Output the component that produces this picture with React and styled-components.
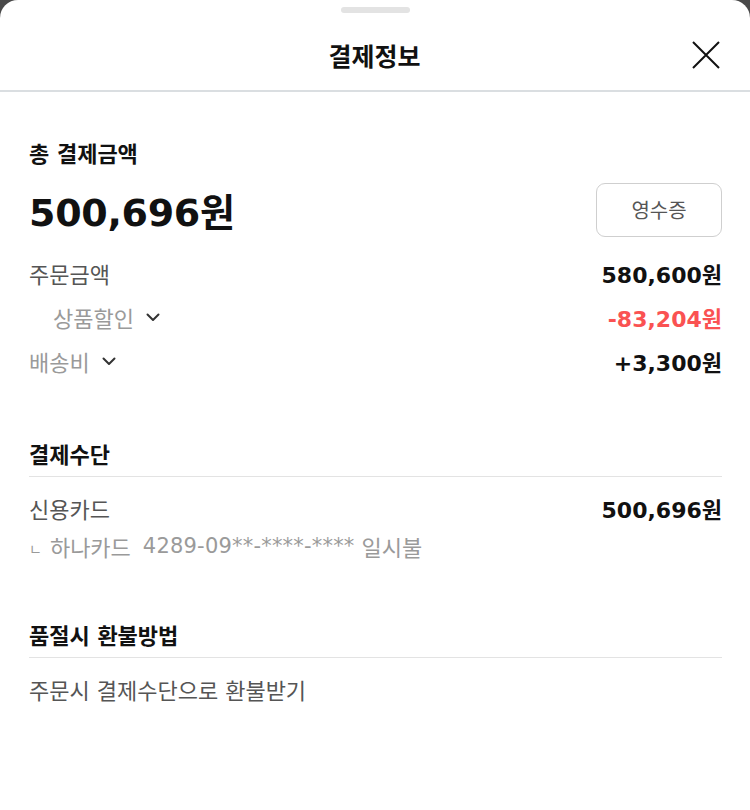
import React from "react";
import styled, { createGlobalStyle } from "styled-components";

const GlobalStyle = createGlobalStyle`
  html, body {
    margin: 0;
    padding: 0;
    background: #4a4a4a;
  }
  body {
    font-family: "DejaVu Sans", "Noto Sans CJK KR", sans-serif;
    color: #111;
  }
`;

function Chevron() {
  return (
    <svg width="14" height="9" viewBox="0 0 14 9" fill="none">
      <polyline points="1.5,1.5 7,7 12.5,1.5" stroke="#333" strokeWidth="2" strokeLinecap="round" strokeLinejoin="round" />
    </svg>
  );
}

function CloseIcon() {
  return (
    <svg width="28" height="28" viewBox="0 0 28 28" fill="none">
      <path d="M1 1L27 27M27 1L1 27" stroke="#111" strokeWidth="2" />
    </svg>
  );
}

export default function App() {
  return (
    <>
      <GlobalStyle />
      <Sheet>
        <Handle />
        <Header>
          <span />
          <Title>결제정보</Title>
          <CloseButton aria-label="닫기">
            <CloseIcon />
          </CloseButton>
        </Header>

        <Content>
          <Section $top={49}>
            <Heading>총 결제금액</Heading>
            <TotalRow>
              <Total>500,696원</Total>
              <ReceiptButton>영수증</ReceiptButton>
            </TotalRow>
            <Row $h={44} $mt={14}>
              <Label>주문금액</Label>
              <Value>580,600원</Value>
            </Row>
            <Row $h={44}>
              <Label $muted $indent={24}>
                상품할인 <Chevron />
              </Label>
              <Value $red>-83,204원</Value>
            </Row>
            <Row $h={44}>
              <Label $muted>
                배송비 <Chevron />
              </Label>
              <Value>+3,300원</Value>
            </Row>
          </Section>

          <Section $top={59}>
            <Heading $line>결제수단</Heading>
            <Row $h={38} $mt={12}>
              <Label>신용카드</Label>
              <Value>500,696원</Value>
            </Row>
            <Row $h={38}>
              <Label $muted>
                <Mark>ㄴ</Mark>하나카드<CardNo>4289-09**-****-****</CardNo>일시불
              </Label>
            </Row>
          </Section>

          <Section $top={58}>
            <Heading $line>품절시 환불방법</Heading>
            <Row $h={38} $mt={12}>
              <Label>주문시 결제수단으로 환불받기</Label>
            </Row>
          </Section>
        </Content>
      </Sheet>
    </>
  );
}

// Styled Components ............

const Sheet = styled.div`
  background: #fff;
  border-radius: 18px 18px 0 0;
  min-height: 810px;
  overflow: hidden;
`;
const Handle = styled.div`
  width: 69px;
  height: 6px;
  margin: 7px auto 0;
  border-radius: 3px;
  background: #e3e3e3;
`;
const Header = styled.div`
  display: grid;
  grid-template-columns: 1fr auto 1fr;
  align-items: center;
  height: 70px;
  margin-top: 7px;
  padding: 0 30px 0 29px;
  border-bottom: 2px solid #dadee1;
`;
const Title = styled.h1`
  margin: 0;
  font-size: 25px;
  font-weight: 700;
  color: #111;
`;
const CloseButton = styled.button`
  justify-self: end;
  display: flex;
  padding: 0;
  border: 0;
  background: none;
  cursor: pointer;
`;
const Content = styled.div`
  padding: 0 28px 0 29px;
`;
const Section = styled.section`
  padding-top: ${(p) => p.$top}px;
`;
const Heading = styled.h2`
  margin: 0;
  font-size: 22px;
  font-weight: 700;
  line-height: 28px;
  color: #111;
  ${(p) =>
    p.$line &&
    `
    padding-bottom: 6px;
    border-bottom: 1px solid #e3e3e3;
  `}
`;
const TotalRow = styled.div`
  display: flex;
  align-items: center;
  justify-content: space-between;
  margin-top: 13px;
`;
const Total = styled.div`
  font-size: 38px;
  font-weight: 700;
  color: #111;
  letter-spacing: -0.3px;
`;
const ReceiptButton = styled.button`
  width: 126px;
  height: 54px;
  border: 1px solid #cfcfcf;
  border-radius: 9px;
  background: #fff;
  font-family: "DejaVu Sans", "Noto Sans CJK KR", sans-serif;
  font-size: 20px;
  color: #555;
  cursor: pointer;
`;
const Row = styled.div`
  display: flex;
  align-items: center;
  justify-content: space-between;
  height: ${(p) => p.$h}px;
  margin-top: ${(p) => p.$mt || 0}px;
`;
const Label = styled.div`
  display: flex;
  align-items: center;
  padding-left: ${(p) => p.$indent || 0}px;
  font-size: 22px;
  color: ${(p) => (p.$muted ? "#9a9a9a" : "#555")};
  white-space: pre;
  svg {
    margin-left: 5px;
  }
`;
const Mark = styled.span`
  font-size: 14px;
  margin-right: 8px;
  position: relative;
  top: 2px;
`;
const CardNo = styled.span`
  margin: 0 7px 0 12px;
  font-size: 21px;
  letter-spacing: 0.2px;
`;
const Value = styled.div`
  font-size: 22px;
  font-weight: 700;
  color: ${(p) => (p.$red ? "#fa5252" : "#111")};
`;
